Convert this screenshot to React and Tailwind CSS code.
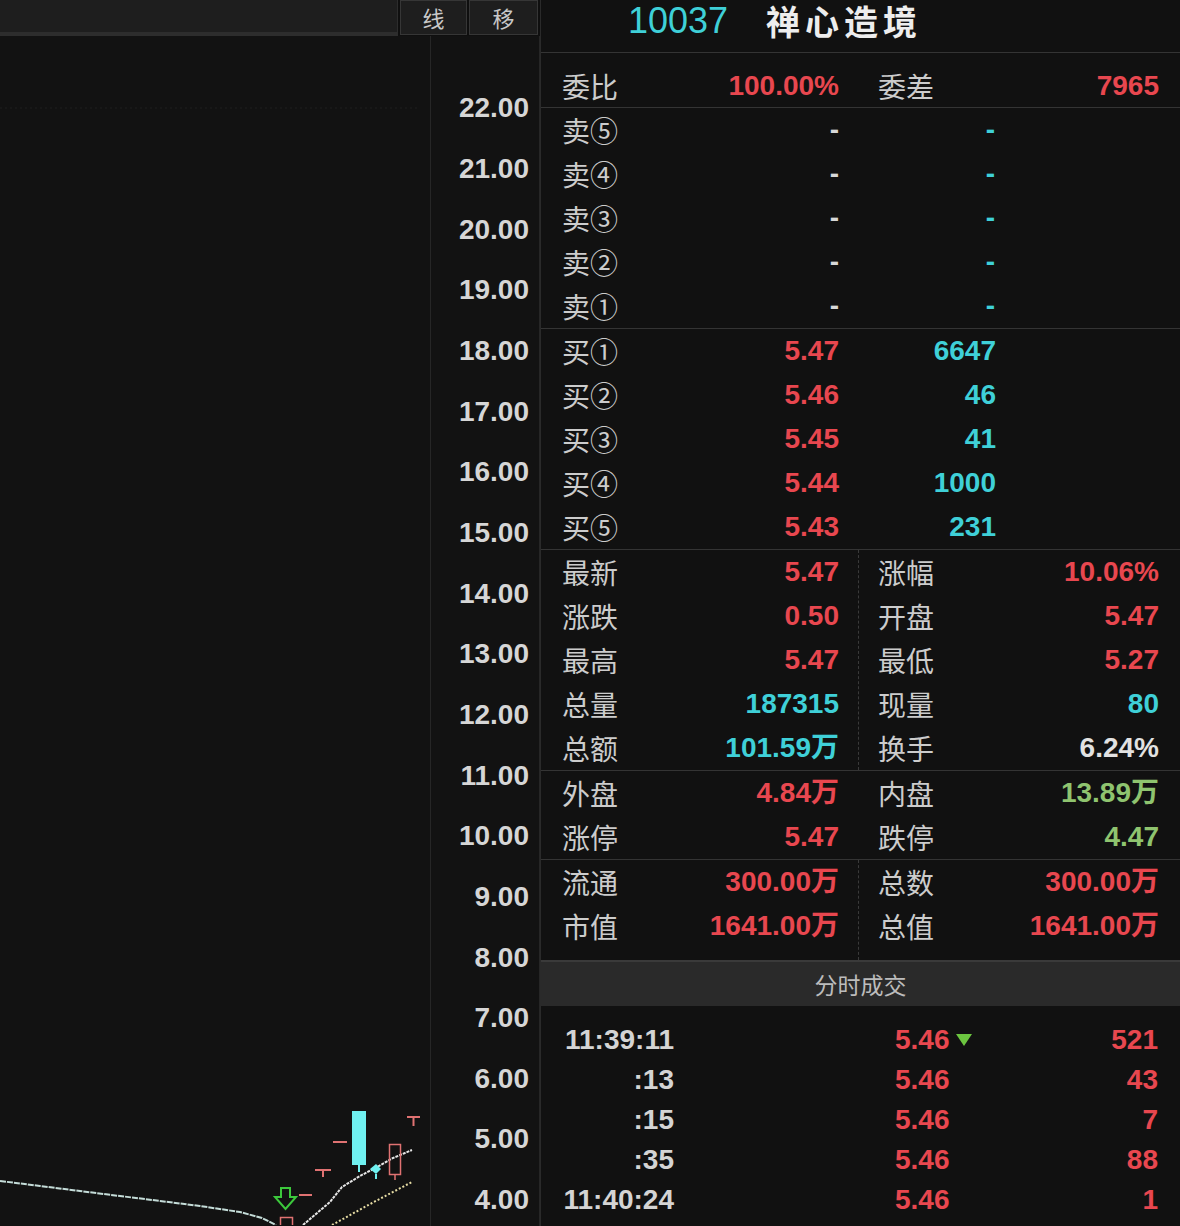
import React from "react";

const RED = "text-[#e8474f]";
const CYAN = "text-[#3fd0d8]";
const GREEN = "text-[#8fc46f]";
const WHITE = "text-[#e2e2e2]";

const NUM = "font-['Liberation_Sans','Noto_Sans_CJK_SC',sans-serif] font-bold text-[28px] leading-none";
const CJK = "font-['Noto_Sans_CJK_SC',sans-serif] text-[28px] leading-none text-[#cccccc]";

const axis = ["22.00","21.00","20.00","19.00","18.00","17.00","16.00","15.00","14.00","13.00","12.00","11.00","10.00","9.00","8.00","7.00","6.00","5.00","4.00"];

const sells = ["卖⑤","卖④","卖③","卖②","卖①"];
const buys = [
  ["买①","5.47","6647"],
  ["买②","5.46","46"],
  ["买③","5.45","41"],
  ["买④","5.44","1000"],
  ["买⑤","5.43","231"],
];

const stats = {
  left: [["最新","5.47",RED],["涨跌","0.50",RED],["最高","5.47",RED],["总量","187315",CYAN],["总额","101.59万",CYAN]],
  right: [["涨幅","10.06%",RED],["开盘","5.47",RED],["最低","5.27",RED],["现量","80",CYAN],["换手","6.24%",WHITE]],
};
const pan = {
  left: [["外盘","4.84万",RED],["涨停","5.47",RED]],
  right: [["内盘","13.89万",GREEN],["跌停","4.47",GREEN]],
};
const cap = {
  left: [["流通","300.00万",RED],["市值","1641.00万",RED]],
  right: [["总数","300.00万",RED],["总值","1641.00万",RED]],
};

const trades = [
  ["11:39:11","5.46",true,"521"],
  [":13","5.46",false,"43"],
  [":15","5.46",false,"7"],
  [":35","5.46",false,"88"],
  ["11:40:24","5.46",false,"1"],
];

function TwoCol({ data, dashed }) {
  return (
    <div className="flex border-b border-[#343434]">
      <div className={dashed ? "w-[318px] pl-[21px] pr-[19px] border-r border-dashed border-[#3a3a3a]" : "w-[318px] pl-[21px] pr-[19px] border-r border-transparent"}>
        {data.left.map(([k, v, c]) => (
          <div key={k} className="flex h-[44px] items-center justify-between">
            <span className={CJK}>{k}</span>
            <span className={NUM + " " + c}>{v}</span>
          </div>
        ))}
      </div>
      <div className="pl-[19px]">
        {data.right.map(([k, v, c]) => (
          <div key={k} className="flex h-[44px] w-[281px] items-center justify-between">
            <span className={CJK}>{k}</span>
            <span className={NUM + " " + c}>{v}</span>
          </div>
        ))}
      </div>
    </div>
  );
}

function Chart() {
  return (
    <svg className="block h-full w-full" viewBox="0 37 430 1189" preserveAspectRatio="none">
      <line x1="0" y1="109" x2="420" y2="109" stroke="#1f1f1f" strokeDasharray="2 3" />
      <polyline
        points="0,1182 40,1187 80,1192 120,1197 160,1202 200,1207 240,1213 262,1219 276,1226"
        fill="none" stroke="#c4dcd8" strokeWidth="2" strokeDasharray="6 1" />
      <polyline
        points="303,1226 330,1203 342,1188 360,1177 377,1168 393,1159 412,1151"
        fill="none" stroke="#e6e6e6" strokeWidth="2" strokeDasharray="3 1" />
      <polyline
        points="332,1226 372,1204 412,1183"
        fill="none" stroke="#e6dca4" strokeWidth="2" strokeDasharray="2 2" />
      <line x1="359" y1="1166" x2="359" y2="1173" stroke="#6ff0f0" strokeWidth="2" />
      <rect x="352" y="1112" width="14" height="54" fill="#6ff0f0" />
      <path d="M370 1170 L376 1165 L381 1170 L376 1175 Z" fill="#6ff0f0" />
      <line x1="376" y1="1175" x2="376" y2="1180" stroke="#6ff0f0" strokeWidth="2" />
      <rect x="389.5" y="1145.5" width="11" height="30" fill="none" stroke="#e07272" strokeWidth="1.5" />
      <line x1="395" y1="1176" x2="395" y2="1181" stroke="#e07272" strokeWidth="1.5" />
      <path d="M407 1118 H420 M413.5 1118 V1127" stroke="#e07272" strokeWidth="2" fill="none" />
      <line x1="333" y1="1143" x2="347" y2="1143" stroke="#e07272" strokeWidth="2" />
      <path d="M315 1171 H331 M323 1171 V1178" stroke="#e07272" strokeWidth="2" fill="none" />
      <line x1="299" y1="1196" x2="312" y2="1196" stroke="#e07272" strokeWidth="2" />
      <path d="M281 1189 H290 V1198 H296 L285.5 1210 L275 1198 H281 Z" fill="none" stroke="#3cc83c" strokeWidth="2" />
      <rect x="280.5" y="1218.5" width="12" height="10" fill="none" stroke="#e07272" strokeWidth="1.5" />
    </svg>
  );
}

export default function App() {
  return (
    <div className="flex h-[1226px] w-[1180px] overflow-hidden bg-[#111111]">
      {/* left: chart + price axis */}
      <div className="flex w-[540px] flex-col">
        <div className="flex h-[37px] bg-[#0f0f0f]">
          <div className="h-[36px] flex-1 border-r border-b-[4px] border-[#2d2d2d] bg-[#1e1e1e]" />
          <div className="ml-[2px] flex h-[35px] w-[67px] items-center justify-center border border-[#363636] bg-[#1e1e1e] pb-[2px] font-['Noto_Sans_CJK_SC',sans-serif] text-[22px] leading-none text-[#c8c8c8]">线</div>
          <div className="ml-[2px] flex h-[35px] w-[69px] items-center justify-center border border-[#363636] bg-[#1e1e1e] pb-[2px] font-['Noto_Sans_CJK_SC',sans-serif] text-[22px] leading-none text-[#c8c8c8]">移</div>
          <div className="w-[2px]" />
        </div>
        <div className="flex flex-1">
          <div className="h-[1189px] w-[430px] bg-[#121212]">
            <Chart />
          </div>
          <div className="flex w-[110px] flex-col border-r border-l border-[#262626] bg-[#121212] pt-[42px] pr-[10px]">
            {axis.map((a) => (
              <div key={a} className={"flex h-[60.67px] items-center justify-end text-[#d6d6d6] " + NUM}>{a}</div>
            ))}
          </div>
        </div>
      </div>

      {/* right: quote panel */}
      <div className="flex w-[640px] flex-col border-l border-[#2a2a2a] bg-[#111111]">
        <div className="flex h-[53px] items-center border-b border-[#343434] pb-[10px] pl-[87px]">
          <span className="font-['Liberation_Sans',sans-serif] text-[36px] leading-none text-[#3fd0d8]">10037</span>
          <span className="ml-[38px] font-['Noto_Sans_CJK_SC',sans-serif] text-[34px] font-bold leading-none tracking-[5px] text-[#ededed]">禅心造境</span>
        </div>

        <div className="flex h-[55px] items-end border-b border-[#343434] pb-[1px]">
          <div className="flex h-[40px] w-[318px] items-center justify-between pl-[21px] pr-[20px]">
            <span className={CJK}>委比</span>
            <span className={NUM + " " + RED}>100.00%</span>
          </div>
          <div className="flex h-[40px] w-[281px] items-center justify-between ml-[19px]">
            <span className={CJK}>委差</span>
            <span className={NUM + " " + RED}>7965</span>
          </div>
        </div>

        <div className="border-b border-[#343434]">
          {sells.map((s) => (
            <div key={s} className="flex h-[44px] items-center pl-[21px]">
              <div className="flex w-[277px] items-center justify-between">
                <span className={CJK}>{s}</span>
                <span className={NUM + " text-[#d8d8d8]"}>-</span>
              </div>
              <div className={"w-[157px] pr-[1px] text-right " + NUM + " " + CYAN}>-</div>
            </div>
          ))}
        </div>

        <div className="border-b border-[#343434]">
          {buys.map(([s, p, v]) => (
            <div key={s} className="flex h-[44px] items-center pl-[21px]">
              <div className="flex w-[277px] items-center justify-between">
                <span className={CJK}>{s}</span>
                <span className={NUM + " " + RED}>{p}</span>
              </div>
              <div className={"w-[157px] text-right " + NUM + " " + CYAN}>{v}</div>
            </div>
          ))}
        </div>

        <TwoCol data={stats} dashed />
        <TwoCol data={pan} />
        <div className="h-[100px]">
          <div className="flex">
            <div className="w-[318px] border-r border-dashed border-[#3a3a3a] pl-[21px] pr-[19px]">
              {cap.left.map(([k, v, c]) => (
                <div key={k} className="flex h-[44px] items-center justify-between">
                  <span className={CJK}>{k}</span>
                  <span className={NUM + " " + c}>{v}</span>
                </div>
              ))}
              <div className="h-[12px]" />
            </div>
            <div className="pl-[19px]">
              {cap.right.map(([k, v, c]) => (
                <div key={k} className="flex h-[44px] w-[281px] items-center justify-between">
                  <span className={CJK}>{k}</span>
                  <span className={NUM + " " + c}>{v}</span>
                </div>
              ))}
            </div>
          </div>
        </div>

        <div className="flex h-[46px] items-center justify-center border-t-2 border-[#3a3a3a] bg-[#2a2a2a] font-['Noto_Sans_CJK_SC',sans-serif] text-[23px] leading-none text-[#bcbcbc]">
          分时成交
        </div>

        <div className="flex-1 pt-[14px]">
          {trades.map(([t, p, arrow, v], i) => (
            <div key={i} className="flex h-[40px] items-center pl-[21px]">
              <div className={"w-[112px] text-right text-[#d4d4d4] " + NUM}>{t}</div>
              <div className="ml-[221px] flex items-center">
                <span className={NUM + " " + RED}>{p}</span>
                {arrow && (
                  <svg width="18" height="14" viewBox="0 0 18 14" className="ml-[5px]">
                    <polygon points="1,1 17,1 9,13" fill="#6cc640" />
                  </svg>
                )}
              </div>
              <div className={"flex-1 pr-[22px] text-right " + NUM + " " + RED}>{v}</div>
            </div>
          ))}
        </div>
      </div>
    </div>
  );
}
